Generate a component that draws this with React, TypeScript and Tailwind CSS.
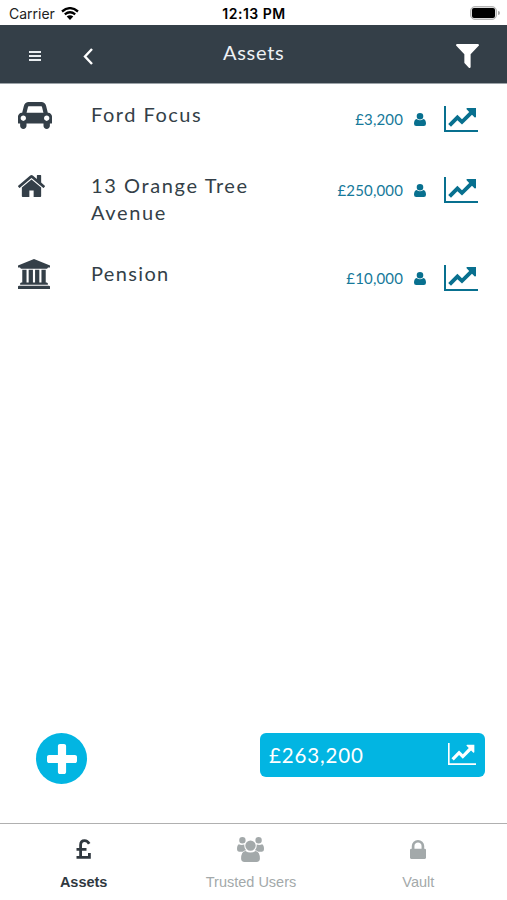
import type { ReactNode } from 'react';

// viewBox is cropped to the drawn shape, so the size given by className is the visible size
const icons = {
    car: {
        box: '0 128 2048 1600',
        d: 'M480 1088q0-66-47-113t-113-47-113 47-47 113 47 113 113 47 113-47 47-113zm36-320h1016l-89-357q-2-8-14-17.5t-21-9.5h-768q-9 0-21 9.5t-14 17.5zm1372 320q0-66-47-113t-113-47-113 47-47 113 47 113 113 47 113-47 47-113zm160-96v384q0 14-9 23t-23 9h-96v128q0 80-56 136t-136 56-136-56-56-136v-128h-1024v128q0 80-56 136t-136 56-136-56-56-136v-128h-96q-14 0-23-9t-9-23v-384q0-93 65.5-158.5t158.5-65.5h28l105-419q23-94 104-157.5t179-63.5h768q98 0 179 63.5t104 157.5l105 419h28q93 0 158.5 65.5t65.5 158.5z',
    },
    home: {
        box: '90 253 1612 1283',
        d: 'M1472 992v480q0 26-19 45t-45 19h-384v-384h-256v384h-384q-26 0-45-19t-19-45v-480q0-1 .5-3t.5-3l575-474 575 474q1 2 1 6zm223-69l-62 74q-8 9-21 11h-3q-13 0-21-7l-692-577-692 577q-12 8-24 7-13-2-21-11l-62-74q-8-10-7-23.5t11-21.5l719-599q32-26 76-26t76 26l244 204v-195q0-14 9-23t23-9h192q14 0 23 9t9 23v408l219 182q10 8 11 21.5t-7 23.5z',
    },
    bank: {
        box: '0 0 1920 1792',
        d: 'M960 0l960 384v128h-128q0 26-20.5 45t-48.5 19h-1526q-28 0-48.5-19t-20.5-45h-128v-128zm-704 640h256v768h128v-768h256v768h128v-768h256v768h128v-768h256v768h59q28 0 48.5 19t20.5 45v64h-1664v-64q0-26 20.5-45t48.5-19h59v-768zm1595 960q28 0 48.5 19t20.5 45v128h-1920v-128q0-26 20.5-45t48.5-19h1782z',
    },
    user: {
        box: '0 0 12 13',
        d: 'M6 0a3.3 3.3 0 0 1 3.3 3.3a3.3 3.3 0 0 1-6.6 0A3.3 3.3 0 0 1 6 0zM2.6 5.9Q6 8.4 9.4 5.9Q12 6.6 12 10.8Q12 13 9.8 13H2.2Q0 13 0 10.8Q0 6.6 2.6 5.9z',
    },
    chart: {
        box: '0 0 34 26',
        d: 'M0 0H2V24H34V26H0zM4.2 18L13.4 8.8L18 13.2L25.2 6L22.6 3.3Q22 2 23.3 2H32V10.7Q31.6 12 30.5 11.2L28 8.8L18 18.6L13.4 14.2L7 20.8z',
    },
    filter: {
        box: '192 256 1410 1408',
        d: 'M1595 295q17 41-14 70l-493 493v742q0 42-39 59-13 5-25 5-27 0-45-19l-256-256q-19-19-19-45v-486l-493-493q-31-29-14-70 17-39 59-39h1280q42 0 59 39z',
    },
    plus: {
        box: '192 128 1408 1408',
        d: 'M1600 736v192q0 40-28 68t-68 28h-416v416q0 40-28 68t-68 28h-192q-40 0-68-28t-28-68v-416h-416q-40 0-68-28t-28-68v-192q0-40 28-68t68-28h416v-416q0-40 28-68t68-28h192q40 0 68 28t28 68v416h416q40 0 68 28t28 68z',
    },
    users: {
        box: '0 0 27 25',
        d: 'M5.4 0a3.2 3.2 0 1 1 0 6.4a3.2 3.2 0 0 1 0-6.4zM21.6 0a3.2 3.2 0 1 1 0 6.4a3.2 3.2 0 0 1 0-6.4zM13.5 3.4a5.2 5.2 0 1 1 0 10.4a5.2 5.2 0 0 1 0-10.4zM1.8 7.3Q4.3 8.6 7.3 7.6Q7 11.3 9.1 13.3Q7 13.4 5.6 14.7H2Q0 14.5 0 12.2Q0 8.2 1.8 7.3zM25.2 7.3Q22.7 8.6 19.7 7.6Q20 11.3 17.9 13.3Q20 13.4 21.4 14.7H25Q27 14.5 27 12.2Q27 8.2 25.2 7.3zM8.4 13.9Q13.5 17.2 18.6 13.9Q22.9 14.7 22.9 21.6Q22.9 25 19.5 25H7.5Q4.1 25 4.1 21.6Q4.1 14.7 8.4 13.9z',
    },
    lock: {
        box: '320 128 1152 1408',
        d: 'M640 768h512v-192q0-106-75-181t-181-75-181 75-75 181v192zm832 96v576q0 40-28 68t-68 28h-960q-40 0-68-28t-28-68v-576q0-40 28-68t68-28h32v-192q0-184 132-316t316-132 316 132 132 316v192h32q40 0 68 28t28 68z',
    },
};

type IconName = keyof typeof icons;

function Icon({ name, className }: { name: IconName; className: string }) {
    return (
        <svg viewBox={icons[name].box} preserveAspectRatio="none" fill="currentColor" className={`shrink-0 ${className}`}>
            <path d={icons[name].d} />
        </svg>
    );
}

const assets: { name: string; value: string; icon: IconName; iconSize: string; height: string; nameSpacing: string }[] = [
    { name: 'Ford Focus', value: '£3,200', icon: 'car', iconSize: 'mt-[18px] h-[27px] w-[34px]', height: 'h-[71px]', nameSpacing: 'tracking-[1.5px]' },
    { name: '13 Orange Tree Avenue', value: '£250,000', icon: 'home', iconSize: 'mt-5 h-[22px] w-[27px]', height: 'h-[88px]', nameSpacing: 'tracking-[1.6px]' },
    { name: 'Pension', value: '£10,000', icon: 'bank', iconSize: 'mt-4 h-[30px] w-8', height: 'h-[71px]', nameSpacing: 'tracking-[1.35px]' },
];

function StatusBar() {
    return (
        <div className="grid h-[25px] grid-cols-3 items-center pr-[7px] pl-[9px] font-['Inter',sans-serif] text-black">
            <div className="flex items-center gap-1.5 pt-0.5">
                <span className="text-[14px] leading-none text-[#222]">Carrier</span>
                <svg viewBox="0 0 18 13" className="h-[13px] w-[18px]">
                    <path d="M1 4.5Q9-2.2 17 4.5M3.8 7.4Q9 3.2 14.2 7.4" fill="none" stroke="currentColor" strokeWidth="2.3" />
                    <path d="M5.7 9.5Q9 6.8 12.3 9.5L9 13z" fill="currentColor" />
                </svg>
            </div>
            <span className="-ml-px pt-[3px] text-center text-[14px] leading-none font-semibold tracking-[0.5px] whitespace-nowrap">12:13 PM</span>
            <div className="flex items-center justify-end gap-px">
                <div className="h-[14px] w-[27px] rounded-[5px] border border-[#b5b5b5] bg-[#ddd] p-px">
                    <div className="h-full rounded-[2px] bg-black" />
                </div>
                <div className="h-1 w-[2px] rounded-r-full bg-[#aaa]" />
            </div>
        </div>
    );
}

function Tab({ label, className, children }: { label: string; className: string; children: ReactNode }) {
    return (
        <div className={`flex flex-1 flex-col items-center ${className}`}>
            <div className="flex h-[50px] items-center">{children}</div>
            <span className="text-[14.5px] leading-4">{label}</span>
        </div>
    );
}

export default function App() {
    return (
        <div className="flex h-[900px] w-[507px] flex-col overflow-hidden bg-white font-['Lato',sans-serif] text-[#343f48]">
            <StatusBar />

            <header className="flex h-[59px] shrink-0 items-start border-b border-[#9ca3a8] bg-[#343f48] pr-7 pl-[29px] text-white">
                <div className="mt-[26px] flex flex-col gap-[2px]">
                    <div className="h-[2px] w-3 bg-[#e8edf0]" />
                    <div className="h-[2px] w-3 bg-[#e8edf0]" />
                    <div className="h-[2px] w-3 bg-[#e8edf0]" />
                </div>
                <svg viewBox="0 0 10 17" className="mt-[23px] ml-[42px] h-[17px] w-2.5">
                    <path d="M9 1L2 8.5L9 16" fill="none" stroke="currentColor" strokeWidth="2.4" />
                </svg>
                <h1 className="mt-[13px] ml-[130px] text-[20px] leading-7 tracking-[0.7px] whitespace-nowrap text-[#eef1f4]">Assets</h1>
                <Icon name="filter" className="mt-[19px] ml-auto h-[24px] w-[23px]" />
            </header>

            <main className="flex-1">
                {assets.map((asset) => (
                    <div key={asset.name} className={`flex items-start pr-[29px] pl-[18px] ${asset.height}`}>
                        <div className="w-[73px]">
                            <Icon name={asset.icon} className={asset.iconSize} />
                        </div>
                        <p className={`mt-[17px] w-[180px] text-[20px] leading-[27px] ${asset.nameSpacing}`}>{asset.name}</p>
                        <div className="mt-[22px] flex flex-1 items-start justify-end text-[#08708f]">
                            <span className="mt-[3px] text-[15px] leading-5 tracking-[0.15px] text-[#16799a]">{asset.value}</span>
                            <Icon name="user" className="mt-[7px] ml-[11px] h-[13px] w-3" />
                            <Icon name="chart" className="ml-[18px] h-[26px] w-[34px]" />
                        </div>
                    </div>
                ))}
            </main>

            <div className="flex h-[91px] shrink-0 items-start justify-between pr-[22px] pl-9">
                <button className="mt-px flex size-[51px] items-center justify-center rounded-full bg-[#02b5e2] text-white">
                    <Icon name="plus" className="size-[30px]" />
                </button>
                <div className="mt-px flex h-11 w-[225px] items-center justify-between rounded-[6px] bg-[#02b5e2] pr-[9px] pl-[9px] text-white">
                    <span className="text-[20.5px] leading-none tracking-[0.85px]">£263,200</span>
                    <Icon name="chart" className="mb-0.5 h-[22px] w-[28px]" />
                </div>
            </div>

            <nav className="flex h-[77px] shrink-0 border-t border-[#b0b0b0] pr-[5px] font-['Liberation_Sans',sans-serif]">
                <Tab label="Assets" className="font-bold text-[#30383f]">
                    <svg viewBox="0 0 15 20" fill="none" stroke="currentColor" strokeWidth="2.8" className="h-5 w-[15px]">
                        <path d="M13.2 4.8Q11.4 1.6 8.6 1.6Q4.6 1.6 4.6 6V18M.5 10.3H10.5M.5 18.4H13.4V14" />
                    </svg>
                </Tab>
                <Tab label="Trusted Users" className="text-[#a3a9aa]">
                    <Icon name="users" className="h-[25px] w-[27px]" />
                </Tab>
                <Tab label="Vault" className="text-[#a3a9aa]">
                    <Icon name="lock" className="h-[19px] w-4" />
                </Tab>
            </nav>
        </div>
    );
}
